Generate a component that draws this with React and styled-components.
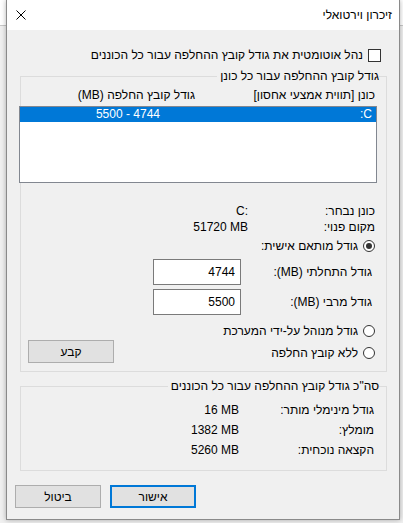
import React from "react";
import styled, { createGlobalStyle } from "styled-components";

const GlobalStyle = createGlobalStyle`
  html, body {
    margin: 0;
    padding: 0;
    height: 100%;
  }
  body {
    font-family: "Liberation Sans", "DejaVu Sans", sans-serif;
    font-size: 12px;
    color: #000;
    background: linear-gradient(#ffffff 0 25px, #c8c8c8 25px 26px, #f0f0f0 26px);
    overflow: hidden;
  }
`;

const Dialog = styled.div`
  margin-left: 6px;
  width: 394px;
  height: 520px;
  box-sizing: border-box;
  border: 1px solid #8a8a8a;
  border-top: none;
  background: #f0f0f0;
  display: flex;
  flex-direction: column;
  direction: rtl;
  box-shadow: 0 0 5px rgba(0, 0, 0, 0.3);
`;

const TitleBar = styled.div`
  height: 30px;
  flex: 0 0 30px;
  background: #fff;
  display: flex;
  align-items: center;
  justify-content: space-between;
  padding: 0 7px 0 9px;
`;

const Title = styled.span`
  font-size: 12px;
  line-height: 14px;
`;

const CloseButton = styled.button`
  border: none;
  background: transparent;
  padding: 0;
  width: 10px;
  height: 10px;
  display: flex;
  svg {
    display: block;
  }
`;

const Body = styled.div`
  display: flex;
  flex-direction: column;
  padding: 18px 12px 0 13px;
`;

const CheckRow = styled.label`
  display: flex;
  align-items: center;
  gap: 5px;
  height: 14px;
  line-height: 14px;
  margin-right: 6px;
`;

const CheckBox = styled.span`
  width: 13px;
  height: 13px;
  box-sizing: border-box;
  border: 1px solid #333;
  background: #fff;
  flex: 0 0 13px;
`;

const Group = styled.fieldset`
  margin: 7px 0 0;
  padding: 0 7px ${(p) => p.$bottom}px 0;
  border: 1px solid #dcdcdc;
  min-width: 0;
`;

const Legend = styled.legend`
  padding: 0 0 0 3px;
  line-height: 14px;
  font-size: 12px;
`;

const ColumnHeader = styled.div`
  display: flex;
  margin-top: 5px;
  padding-right: 4px;
  line-height: 14px;
  height: 14px;
`;

const HeaderCell = styled.span`
  flex: 0 0 ${(p) => (p.$width ? `${p.$width}px` : "auto")};
`;

const ListBox = styled.div`
  margin: 4px 2px 0 -2px;
  height: 77px;
  box-sizing: border-box;
  background: #fff;
  border: 1px solid #828790;
`;

const ListRow = styled.div`
  display: flex;
  height: 15px;
  line-height: 15px;
  padding-right: 4px;
  background: ${(p) => (p.$selected ? "#0078d7" : "transparent")};
  color: ${(p) => (p.$selected ? "#fff" : "#000")};
`;

const ListCell = styled.span`
  flex: 0 0 ${(p) => (p.$width ? `${p.$width}px` : "auto")};
`;

const InfoList = styled.div`
  display: flex;
  flex-direction: column;
  margin-top: ${(p) => p.$top}px;
`;

const InfoRow = styled.div`
  display: flex;
  height: ${(p) => p.$height}px;
  line-height: ${(p) => p.$height}px;
  padding-right: ${(p) => p.$pad}px;
`;

const InfoLabel = styled.span`
  flex: 0 0 ${(p) => p.$width}px;
`;

const InfoValue = styled.span`
  direction: ltr;
  unicode-bidi: isolate;
`;

const RadioRow = styled.label`
  display: flex;
  align-items: center;
  gap: 5px;
  height: 14px;
  line-height: 14px;
  padding-right: 4px;
  margin-top: ${(p) => p.$top || 0}px;
`;

const Radio = styled.span`
  width: 12px;
  height: 12px;
  flex: 0 0 12px;
  box-sizing: border-box;
  border: 1px solid #333;
  border-radius: 50%;
  background: #fff;
  display: flex;
  align-items: center;
  justify-content: center;

  &::after {
    content: "";
    width: 6px;
    height: 6px;
    border-radius: 50%;
    background: #333;
    display: ${(p) => (p.$checked ? "block" : "none")};
  }
`;

const FieldRow = styled.div`
  display: flex;
  align-items: center;
  height: 26px;
  margin-top: ${(p) => p.$top}px;
`;

const FieldLabel = styled.span`
  flex: 0 0 138px;
  box-sizing: border-box;
  padding-right: 7px;
  line-height: 14px;
`;

const TextInput = styled.input`
  width: 88px;
  height: 26px;
  box-sizing: border-box;
  border: 1px solid #7a7a7a;
  background: #fff;
  font: inherit;
  font-size: 12px;
  text-align: right;
  direction: ltr;
  padding: 0 5px 0 4px;
  margin: 0;
  outline: none;
`;

const OptionsRow = styled.div`
  display: flex;
  justify-content: space-between;
  align-items: flex-end;
  margin-top: 9px;
`;

const RadioColumn = styled.div`
  display: flex;
  flex-direction: column;
  gap: 8px;
`;

const Button = styled.button`
  width: 86px;
  height: 23px;
  box-sizing: border-box;
  margin: 0;
  padding: 0;
  font: inherit;
  font-size: 12px;
  color: #000;
  background: #e1e1e1;
  border: ${(p) => (p.$default ? "2px solid #0078d7" : "1px solid #adadad")};
`;

const SetButton = styled(Button)`
  margin: 0 0 -3px 7px;
`;

const Footer = styled.div`
  display: flex;
  justify-content: flex-end;
  gap: 9px;
  margin: 14px 0 0 -5px;
`;

export default function App() {
  return (
    <>
      <GlobalStyle />
      <Dialog>
        <TitleBar>
          <Title>זיכרון וירטואלי</Title>
          <CloseButton aria-label="סגור">
            <svg width="10" height="10" viewBox="0 0 10 10">
              <path d="M0.5 0.5 L9.5 9.5 M9.5 0.5 L0.5 9.5" stroke="#000" strokeWidth="1" fill="none" />
            </svg>
          </CloseButton>
        </TitleBar>

        <Body>
          <CheckRow>
            <CheckBox />
            <span>נהל אוטומטית את גודל קובץ ההחלפה עבור כל הכוננים</span>
          </CheckRow>

          <Group $bottom={11}>
            <Legend>גודל קובץ ההחלפה עבור כל כונן</Legend>
            <ColumnHeader>
              <HeaderCell $width={180}>כונן [תווית אמצעי אחסון]</HeaderCell>
              <HeaderCell>גודל קובץ החלפה (MB)</HeaderCell>
            </ColumnHeader>
            <ListBox>
              <ListRow $selected>
                <ListCell $width={212}>C:</ListCell>
                <ListCell>4744 - 5500</ListCell>
              </ListRow>
            </ListBox>

            <InfoList $top={20}>
              <InfoRow $height={16} $pad={4}>
                <InfoLabel $width={127}>כונן נבחר:</InfoLabel>
                <InfoValue>C:</InfoValue>
              </InfoRow>
              <InfoRow $height={16} $pad={4}>
                <InfoLabel $width={127}>מקום פנוי:</InfoLabel>
                <InfoValue>51720 MB</InfoValue>
              </InfoRow>
            </InfoList>

            <RadioRow $top={4}>
              <Radio $checked />
              <span>גודל מותאם אישית:</span>
            </RadioRow>

            <FieldRow $top={6}>
              <FieldLabel>גודל התחלתי (MB):</FieldLabel>
              <TextInput defaultValue="4744" />
            </FieldRow>
            <FieldRow $top={4}>
              <FieldLabel>גודל מרבי (MB):</FieldLabel>
              <TextInput defaultValue="5500" />
            </FieldRow>

            <OptionsRow>
              <RadioColumn>
                <RadioRow>
                  <Radio />
                  <span>גודל מנוהל על-ידי המערכת</span>
                </RadioRow>
                <RadioRow>
                  <Radio />
                  <span>ללא קובץ החלפה</span>
                </RadioRow>
              </RadioColumn>
              <SetButton>קבע</SetButton>
            </OptionsRow>
          </Group>

          <Group $bottom={10}>
            <Legend>סה"כ גודל קובץ ההחלפה עבור כל הכוננים</Legend>
            <InfoList $top={7}>
              <InfoRow $height={20} $pad={5}>
                <InfoLabel $width={135}>גודל מינימלי מותר:</InfoLabel>
                <InfoValue>16 MB</InfoValue>
              </InfoRow>
              <InfoRow $height={20} $pad={5}>
                <InfoLabel $width={135}>מומלץ:</InfoLabel>
                <InfoValue>1382 MB</InfoValue>
              </InfoRow>
              <InfoRow $height={20} $pad={5}>
                <InfoLabel $width={135}>הקצאה נוכחית:</InfoLabel>
                <InfoValue>5260 MB</InfoValue>
              </InfoRow>
            </InfoList>
          </Group>

          <Footer>
            <Button $default>אישור</Button>
            <Button>ביטול</Button>
          </Footer>
        </Body>
      </Dialog>
    </>
  );
}
